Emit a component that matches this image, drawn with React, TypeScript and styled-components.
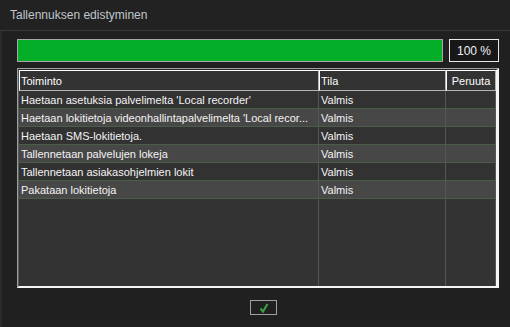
import React from "react";
import styled, { createGlobalStyle } from "styled-components";

const Global = createGlobalStyle`
  html, body { margin: 0; padding: 0; background: #202020; overflow: hidden; }
  * { box-sizing: border-box; }
`;

const FONT = `"Liberation Sans", Arial, sans-serif`;

const Window = styled.div`
  width: 510px;
  height: 327px;
  background: #202020;
  border-left: 2px solid #2a2a2a;
  display: flex;
  flex-direction: column;
  font-family: ${FONT};
`;

const TitleBar = styled.div`
  height: 31px;
  flex: none;
  background: #222222;
  border-bottom: 1px solid #3a3a3a;
  padding: 0 0 0 8px;
  display: flex;
  align-items: center;
  color: #c0c6cc;
  font-size: 12px;
  margin-left: -2px;
  padding-left: 10px;
`;

const Body = styled.div`
  padding: 8px 11px 0 15px;
  display: flex;
  flex-direction: column;
`;

const ProgressRow = styled.div`
  display: flex;
  gap: 6px;
  height: 23px;
`;

const Track = styled.div`
  flex: 1;
  border: 1px solid #a8a8a8;
  background: #1a1a1a;
  display: flex;
`;

const Fill = styled.div`
  background: #05ae28;
  height: 100%;
`;

const Percent = styled.div`
  width: 50px;
  border: 1px solid #e8e8e8;
  background: #181818;
  color: #eef0f6;
  font-size: 12px;
  display: flex;
  align-items: center;
  justify-content: center;
`;

const Frame = styled.div`
  margin-top: 6px;
  height: 220px;
  border: 1px solid;
  border-color: #a0a0a0 #f4f4f4 #f4f4f4 #a0a0a0;
`;

const Inner = styled.div`
  height: 100%;
  border-style: solid;
  border-width: 1px 2px 1px 1px;
  border-color: #262626 #f4f4f4 #f4f4f4 #5a5a5a;
  background: #333333;
  display: flex;
  flex-direction: column;
`;

const HeaderRow = styled.div`
  display: flex;
  height: 21px;
  flex: none;
`;

const HeaderCell = styled.div<{ $w: number; $center?: boolean }>`
  width: ${(p) => p.$w}px;
  flex: none;
  border-style: solid;
  border-width: 1px;
  border-color: #ffffff #b4b4b4 #b4b4b4 #ffffff;
  background: #333333;
  color: #ffffff;
  font-size: 11px;
  display: flex;
  align-items: center;
  justify-content: ${(p) => (p.$center ? "center" : "flex-start")};
  padding-left: ${(p) => (p.$center ? 0 : 1)}px;
  white-space: nowrap;
`;

const Row = styled.div<{ $alt: boolean }>`
  display: flex;
  height: 18px;
  flex: none;
  border-bottom: 1px solid #4b5d48;
  background: ${(p) => (p.$alt ? "#474747" : "#323232")};
`;

const Filler = styled.div`
  display: flex;
  flex: 1;
  background: #333333;
`;

const Cell = styled.div<{ $w: number }>`
  width: ${(p) => p.$w}px;
  flex: none;
  border-right: 1px solid #4b5d48;
  color: #f4f4f4;
  font-size: 11px;
  padding-left: 2px;
  display: flex;
  align-items: center;
  white-space: nowrap;
  overflow: hidden;
`;

const Footer = styled.div`
  display: flex;
  justify-content: center;
  padding-left: 11px;
  margin-top: 12px;
`;

const OkButton = styled.button`
  width: 27px;
  height: 15px;
  padding: 0;
  background: #202020;
  border: 1px solid #a0a0a0;
  display: flex;
  align-items: center;
  justify-content: center;
`;

const rows = [
  "Haetaan asetuksia palvelimelta 'Local recorder'",
  "Haetaan lokitietoja videonhallintapalvelimelta 'Local recor...",
  "Haetaan SMS-lokitietoja.",
  "Tallennetaan palvelujen lokeja",
  "Tallennetaan asiakasohjelmien lokit",
  "Pakataan lokitietoja",
];

const W = [300, 127, 50];

export default function App() {
  const progress = 100;
  return (
    <>
      <Global />
      <Window>
        <TitleBar>Tallennuksen edistyminen</TitleBar>
        <Body>
          <ProgressRow>
            <Track>
              <Fill style={{ width: `${progress}%` }} />
            </Track>
            <Percent>{progress} %</Percent>
          </ProgressRow>
          <Frame>
            <Inner>
              <HeaderRow>
                <HeaderCell $w={W[0]}>Toiminto</HeaderCell>
                <HeaderCell $w={W[1]}>Tila</HeaderCell>
                <HeaderCell $w={W[2]} $center>
                  Peruuta
                </HeaderCell>
              </HeaderRow>
              {rows.map((r, i) => (
                <Row key={i} $alt={i % 2 === 1}>
                  <Cell $w={W[0]}>{r}</Cell>
                  <Cell $w={W[1]}>Valmis</Cell>
                  <Cell $w={W[2]} />
                </Row>
              ))}
              <Filler>
                <Cell $w={W[0]} />
                <Cell $w={W[1]} />
                <Cell $w={W[2]} />
              </Filler>
            </Inner>
          </Frame>
          <Footer>
            <OkButton>
              <svg width="10" height="10" viewBox="0 0 10 10">
                <path
                  d="M1.5 5.5 L4 8.5 L8.5 1"
                  fill="none"
                  stroke="#38a040"
                  strokeWidth="2.2"
                  strokeLinejoin="miter"
                />
              </svg>
            </OkButton>
          </Footer>
        </Body>
      </Window>
    </>
  );
}
